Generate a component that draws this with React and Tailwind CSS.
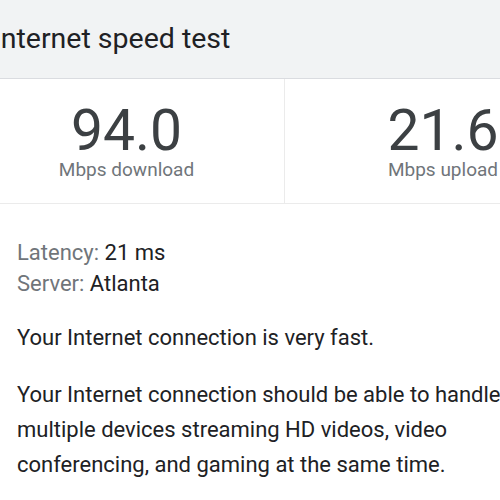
export default function App() {
  const stats = [
    { value: '94.0', label: 'Mbps download' },
    { value: '21.6', label: 'Mbps upload' },
  ];

  return (
    <div className="w-[500px] h-[500px] overflow-hidden bg-white font-['Roboto',sans-serif]">
      <div className="w-[632px] ml-[-31px]">
        {/* Header */}
        <div className="h-[79px] bg-[#f1f3f4] border-b border-[#dadce0] flex items-center pl-[24px]">
          <h1 className="text-[28.5px] text-[#202124] leading-none">Internet speed test</h1>
        </div>

        {/* Stats */}
        <div className="grid grid-cols-2 h-[125px] border-b border-[#ebebeb]">
          {stats.map((s, i) => (
            <div
              key={s.label}
              className={`flex flex-col items-center pt-[24px] ${i === 0 ? 'border-r border-[#ebebeb]' : ''}`}
            >
              <div className="text-[57px] leading-[56px] text-[#3c4043]">{s.value}</div>
              <div className="text-[19px] leading-[22px] text-[#70757a]">{s.label}</div>
            </div>
          ))}
        </div>

        {/* Details */}
        <div className="pl-[48px] pt-[33px] text-[22px] text-[#202124]">
          <div className="leading-[31px]">
            <span className="text-[#70757a]">Latency: </span>21 ms
          </div>
          <div className="leading-[31px]">
            <span className="text-[#70757a]">Server: </span>Atlanta
          </div>
          <p className="mt-[21px] leading-[35px]">Your Internet connection is very fast.</p>
          <p className="mt-[22px] leading-[35px] max-w-[530px]">
            Your Internet connection should be able to handle multiple devices streaming HD videos, video
            conferencing, and gaming at the same time.
          </p>
        </div>
      </div>
    </div>
  );
}
